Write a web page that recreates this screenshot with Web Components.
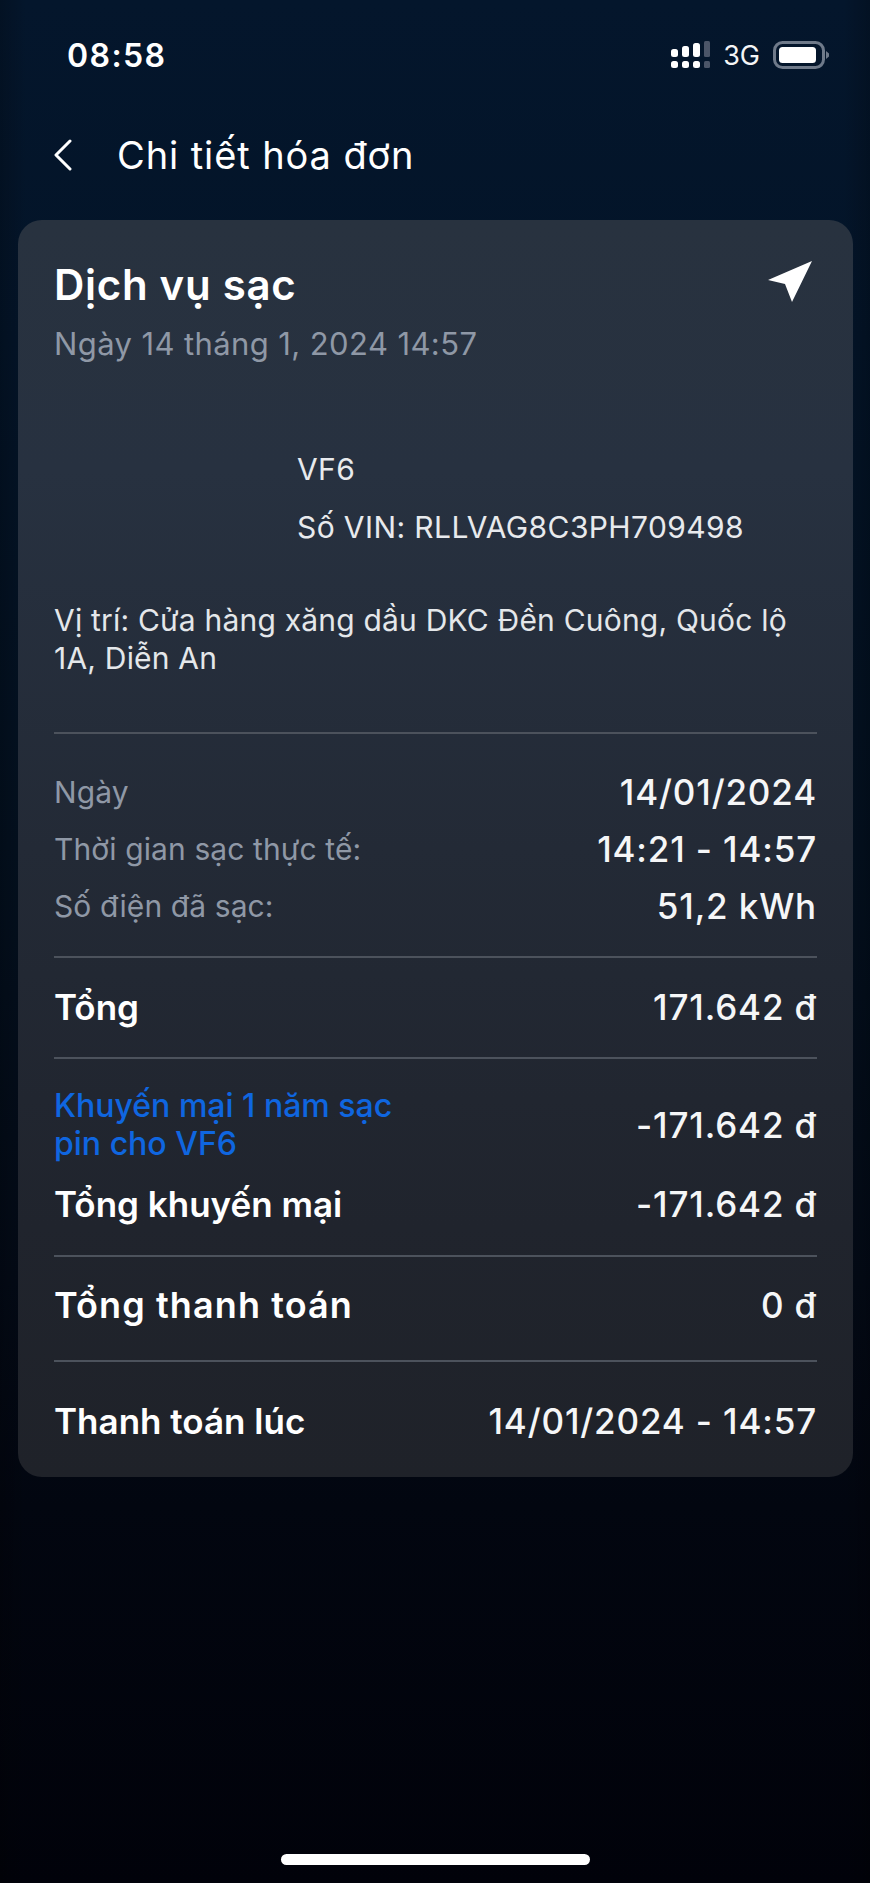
<!DOCTYPE html>
<html lang="vi">
<head>
<meta charset="utf-8">
<title>Chi tiết hóa đơn</title>
<style>
    html, body { margin: 0; height: 100%; }
    body {
        font-family: "Inter", "Noto Sans", sans-serif;
        color: #fff;
        background: #010205;
    }
</style>
</head>
<body>
<invoice-screen>
    <status-bar time="08:58" network="3G"></status-bar>
    <nav-header>Chi tiết hóa đơn</nav-header>
    <invoice-card>
        <span slot="title">Dịch vụ sạc</span>
        <span slot="date">Ngày 14 tháng 1, 2024 14:57</span>

        <vehicle-info name="VF6" vin="Số VIN: RLLVAG8C3PH709498"></vehicle-info>
        <location-text>Vị trí: Cửa hàng xăng dầu DKC Đền Cuông, Quốc lộ 1A, Diễn An</location-text>

        <card-section pad="29px 0 22px">
            <info-row label="Ngày" value="14/01/2024" muted></info-row>
            <info-row label="Thời gian sạc thực tế:" value="14:21 - 14:57" muted></info-row>
            <info-row label="Số điện đã sạc:" value="51,2 kWh" muted></info-row>
        </card-section>
        <card-section pad="20px 0 22px">
            <info-row label="Tổng" value="171.642 đ" strong></info-row>
        </card-section>
        <card-section pad="26px 0 23px">
            <info-row value="-171.642 đ" promo>
                <span slot="label">Khuyến mại 1 năm sạc<br>pin cho VF6</span>
            </info-row>
            <info-row label="Tổng khuyến mại" value="-171.642 đ" strong></info-row>
        </card-section>
        <card-section pad="19px 0 27px">
            <info-row label="Tổng thanh toán" value="0 đ" strong large></info-row>
        </card-section>
        <card-section pad="30px 0 28px">
            <info-row label="Thanh toán lúc" value="14/01/2024 - 14:57" strong></info-row>
        </card-section>
    </invoice-card>
    <home-indicator></home-indicator>
</invoice-screen>

<script>
class InvoiceScreen extends HTMLElement {
    constructor() {
        super();
        this.attachShadow({ mode: 'open' });
        this.shadowRoot.innerHTML = `
            <style>
                :host {
                    display: flex;
                    flex-direction: column;
                    box-sizing: border-box;
                    width: 870px;
                    height: 1883px;
                    overflow: hidden;
                    background:
                        linear-gradient(90deg, rgba(0,0,0,.2) 0, rgba(0,0,0,0) 3%, rgba(0,0,0,0) 97%, rgba(0,0,0,.2) 100%),
                        linear-gradient(180deg, #04162c 0, #031428 18%, #03101f 45%, #030a16 68%, #020610 80%, #01020a 100%);
                }
            </style>
            <slot></slot>
        `;
    }
}

class StatusBar extends HTMLElement {
    constructor() {
        super();
        this.attachShadow({ mode: 'open' });
        this.shadowRoot.innerHTML = `
            <style>
                :host {
                    display: flex;
                    align-items: center;
                    justify-content: space-between;
                    height: 110px;
                    padding: 0 41px 0 67px;
                }
                .time { font-size: 32px; font-weight: 600; letter-spacing: 1.4px; }
                .right { display: flex; align-items: center; gap: 13px; }
                .net { font-size: 27px; font-weight: 400; color: #f4f5f6; }
                svg { display: block; }
            </style>
            <span class="time"></span>
            <div class="right">
                <svg width="39" height="28" viewBox="0 0 39 28" fill="#fff">
                    <rect x="0" y="8" width="7" height="8" rx="2.5"/>
                    <rect x="11" y="5" width="7" height="11" rx="2.5"/>
                    <rect x="22" y="2" width="7" height="14" rx="2.5"/>
                    <rect x="33" y="0" width="6" height="16" rx="1.5" fill="#4b5568"/>
                    <rect x="0" y="20" width="7" height="7" rx="2.5"/>
                    <rect x="11" y="20" width="7" height="7" rx="2.5"/>
                    <rect x="22" y="20" width="7" height="7" rx="2.5"/>
                    <rect x="33" y="20" width="6" height="7" rx="1.5" fill="#4b5568"/>
                </svg>
                <span class="net"></span>
                <svg width="56" height="28" viewBox="0 0 56 28">
                    <rect x="1.5" y="1.5" width="49" height="25" rx="8" fill="none" stroke="#6f7a8a" stroke-width="3"/>
                    <rect x="6" y="6" width="37" height="16" rx="3.5" fill="#fff"/>
                    <path d="M53 10 L56 12.5 V15.5 L53 18 Z" fill="#6f7a8a"/>
                </svg>
            </div>
        `;
    }

    connectedCallback() {
        this.shadowRoot.querySelector('.time').textContent = this.getAttribute('time');
        this.shadowRoot.querySelector('.net').textContent = this.getAttribute('network');
    }
}

class NavHeader extends HTMLElement {
    constructor() {
        super();
        this.attachShadow({ mode: 'open' });
        this.shadowRoot.innerHTML = `
            <style>
                :host {
                    display: flex;
                    align-items: center;
                    gap: 45px;
                    height: 90px;
                    padding: 0 0 20px 54px;
                    font-size: 38px;
                    font-weight: 400;
                    letter-spacing: .9px;
                }
                svg { display: block; flex: none; }
            </style>
            <svg width="18" height="32" viewBox="0 0 18 32" fill="none" stroke="#fff" stroke-width="3" stroke-linecap="round" stroke-linejoin="round">
                <path d="M16 2 L2 16 L16 30"/>
            </svg>
            <span><slot></slot></span>
        `;
    }
}

class InvoiceCard extends HTMLElement {
    constructor() {
        super();
        this.attachShadow({ mode: 'open' });
        this.shadowRoot.innerHTML = `
            <style>
                :host {
                    display: block;
                    box-sizing: border-box;
                    width: 835px;
                    margin-left: 18px;
                    padding: 40px 36px 0;
                    border-radius: 24px;
                    background: linear-gradient(180deg, #28323f 0, #273140 20%, #232a36 50%, #20242d 80%, #1f2229 100%);
                }
                .head { display: flex; justify-content: space-between; align-items: flex-start; }
                .title { font-size: 42px; font-weight: 600; line-height: 50px; letter-spacing: .7px; }
                .date { margin-top: 14px; font-size: 31px; line-height: 40px; letter-spacing: .4px; color: #8f98a6; }
                svg { display: block; margin: 1px 5px 0 0; }
            </style>
            <div class="head">
                <div>
                    <div class="title"><slot name="title"></slot></div>
                    <div class="date"><slot name="date"></slot></div>
                </div>
                <svg width="44" height="42" viewBox="0 0 44 42" fill="#fff">
                    <path d="M44 0 L0 19 L17 23 L24 41 Z"/>
                </svg>
            </div>
            <slot></slot>
        `;
    }
}

class VehicleInfo extends HTMLElement {
    constructor() {
        super();
        this.attachShadow({ mode: 'open' });
        this.shadowRoot.innerHTML = `
            <style>
                :host {
                    display: block;
                    padding: 86px 0 55px 243px;
                    font-size: 30px;
                    line-height: 38px;
                    letter-spacing: .4px;
                    color: #e8eaed;
                }
                .vin { margin-top: 20px; }
            </style>
            <div class="name"></div>
            <div class="vin"></div>
        `;
    }

    connectedCallback() {
        this.shadowRoot.querySelector('.name').textContent = this.getAttribute('name');
        this.shadowRoot.querySelector('.vin').textContent = this.getAttribute('vin');
    }
}

class LocationText extends HTMLElement {
    constructor() {
        super();
        this.attachShadow({ mode: 'open' });
        this.shadowRoot.innerHTML = `
            <style>
                :host {
                    display: block;
                    margin-bottom: 55px;
                    font-size: 30px;
                    line-height: 38px;
                    letter-spacing: .2px;
                    color: #e4e7ea;
                }
            </style>
            <slot></slot>
        `;
    }
}

class CardSection extends HTMLElement {
    constructor() {
        super();
        this.attachShadow({ mode: 'open' });
        this.shadowRoot.innerHTML = `
            <style>
                :host {
                    display: block;
                    border-top: 2px solid #4c525c;
                }
            </style>
            <slot></slot>
        `;
    }

    connectedCallback() {
        this.style.padding = this.getAttribute('pad');
    }
}

class InfoRow extends HTMLElement {
    constructor() {
        super();
        this.attachShadow({ mode: 'open' });
        this.shadowRoot.innerHTML = `
            <style>
                :host {
                    display: flex;
                    justify-content: space-between;
                    align-items: center;
                    min-height: 57px;
                    font-size: 35px;
                    line-height: 38px;
                }
                .value { font-weight: 500; letter-spacing: .85px; color: #f5f6f7; white-space: nowrap; }
                :host([muted]) .label { font-size: 30px; letter-spacing: .1px; color: #8f98a6; }
                :host([strong]) .label { font-weight: 600; color: #fff; }
                :host([large]) .label { font-size: 36px; letter-spacing: 1.1px; }
                :host([promo]) { min-height: 79px; margin-bottom: 11px; }
                :host([promo]) .label { font-size: 32px; font-weight: 500; line-height: 38px; color: #0f66e0; }
            </style>
            <span class="label"><slot name="label"></slot></span>
            <span class="value"></span>
        `;
    }

    connectedCallback() {
        if (this.hasAttribute('label')) {
            this.shadowRoot.querySelector('.label').textContent = this.getAttribute('label');
        }
        this.shadowRoot.querySelector('.value').textContent = this.getAttribute('value');
    }
}

class HomeIndicator extends HTMLElement {
    constructor() {
        super();
        this.attachShadow({ mode: 'open' });
        this.shadowRoot.innerHTML = `
            <style>
                :host {
                    display: block;
                    width: 309px;
                    height: 11px;
                    margin: auto auto 18px;
                    border-radius: 6px;
                    background: #fff;
                }
            </style>
        `;
    }
}

customElements.define('invoice-screen', InvoiceScreen);
customElements.define('status-bar', StatusBar);
customElements.define('nav-header', NavHeader);
customElements.define('invoice-card', InvoiceCard);
customElements.define('vehicle-info', VehicleInfo);
customElements.define('location-text', LocationText);
customElements.define('card-section', CardSection);
customElements.define('info-row', InfoRow);
customElements.define('home-indicator', HomeIndicator);
</script>
</body>
</html>
